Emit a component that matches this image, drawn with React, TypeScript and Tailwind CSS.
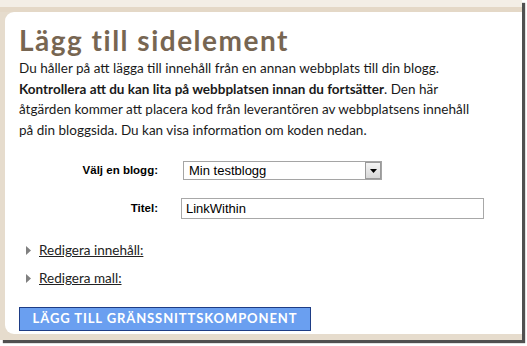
export default function App() {
  return (
    <div className="w-[527px] h-[346px] bg-white overflow-hidden">
      <div className="w-[522px] h-[340px] flex flex-col bg-[#e5dacb] border-t-[7px] border-t-[#f3eee6] shadow-[3px_3px_1px_#505050]">
        <div className="h-[5px] bg-[#e4d8c7]" />
        <div className="flex-1 flex pl-[5px] pb-[6px] bg-[#e6dccd]">
          <div
            className="flex-1 bg-white rounded-l-[9px] pl-[14px] pt-[12px] text-[#1a1a1a]"
            style={{ fontFamily: 'Lato, "DejaVu Sans", sans-serif' }}
          >
            <h1 className="text-[28px] leading-[32px] font-bold tracking-[1.5px] text-[#776652]">Lägg till sidelement</h1>
            <p className="text-[13.5px] leading-[20.5px] mt-[2px] pr-[6px] whitespace-nowrap">
              Du håller på att lägga till innehåll från en annan webbplats till din blogg.
              <br />
              <b>Kontrollera att du kan lita på webbplatsen innan du fortsätter</b>. Den här
              <br />
              åtgärden kommer att placera kod från leverantören av webbplatsens innehåll
              <br />
              på din bloggsida. Du kan visa information om koden nedan.
            </p>

            <div
              className="mt-[21px] grid grid-cols-[139px_1fr] items-center gap-y-[18px] text-[11.5px]"
              style={{ fontFamily: '"Liberation Sans", Arial, sans-serif' }}
            >
              <div className="text-right font-bold text-black">Välj en blogg:</div>
              <div className="pl-[25px]">
                <div className="w-[199px] h-[19px] border border-[#a5a5a5] flex items-center bg-white">
                  <span className="flex-1 pl-[5px] text-[13px] text-black">Min testblogg</span>
                  <span className="w-[16px] h-[17px] border border-[#9a9a9a] bg-gradient-to-b from-[#f4f4f4] to-[#d8d8d8] flex items-center justify-center">
                    <svg width="7" height="4" viewBox="0 0 7 4">
                      <polygon points="0,0 7,0 3.5,4" fill="#000" />
                    </svg>
                  </span>
                </div>
              </div>
              <div className="text-right font-bold text-black">Titel:</div>
              <div className="pl-[23px]">
                <div className="w-[303px] h-[21px] border border-[#a8a8a8] flex items-center pl-[4px] text-[13px] text-black">
                  LinkWithin
                </div>
              </div>
            </div>

            <div className="mt-[22px] flex flex-col gap-[10px] text-[13.5px] text-[#222]">
              <div className="flex items-center gap-[8px] pl-[7px] leading-[18px]">
                <svg width="5" height="9" viewBox="0 0 5 9">
                  <polygon points="0,0 5,4.5 0,9" fill="#808080" />
                </svg>
                <span className="underline">Redigera innehåll:</span>
              </div>
              <div className="flex items-center gap-[8px] pl-[7px] leading-[18px]">
                <svg width="5" height="9" viewBox="0 0 5 9">
                  <polygon points="0,0 5,4.5 0,9" fill="#808080" />
                </svg>
                <span className="underline">Redigera mall:</span>
              </div>
            </div>

            <button className="mt-[20px] w-[292px] h-[24px] bg-[#6a9ff0] border border-[#1e3d85] text-white font-bold text-[13px] tracking-[0.9px]">
              LÄGG TILL GRÄNSSNITTSKOMPONENT
            </button>
          </div>
        </div>
      </div>
    </div>
  )
}
